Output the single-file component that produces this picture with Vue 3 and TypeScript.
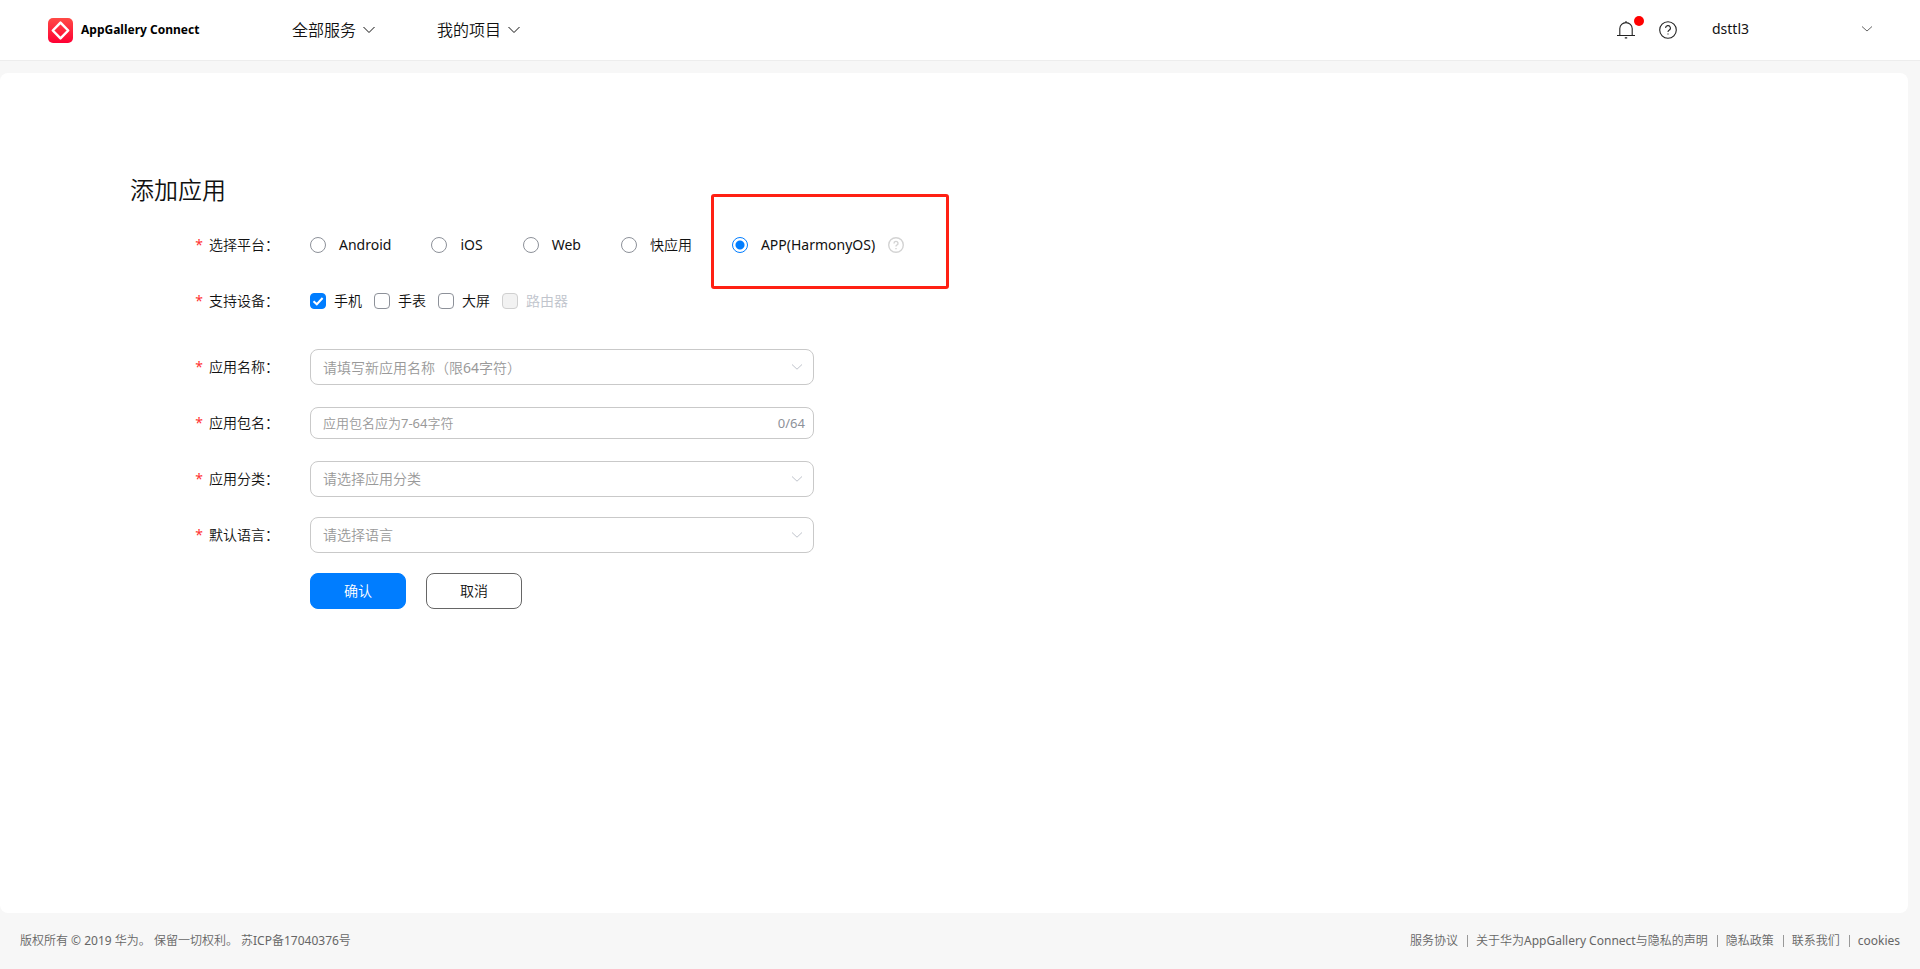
<script setup lang="ts">
import { ref } from 'vue'

interface Option {
  value: string
  label: string
  disabled?: boolean
}

const menus: string[] = ['全部服务', '我的项目']

const platforms: Option[] = [
  { value: 'android', label: 'Android' },
  { value: 'ios', label: 'iOS' },
  { value: 'web', label: 'Web' },
  { value: 'quick', label: '快应用' },
  { value: 'harmony', label: 'APP(HarmonyOS)' },
]

const devices: Option[] = [
  { value: 'phone', label: '手机' },
  { value: 'watch', label: '手表' },
  { value: 'tv', label: '大屏' },
  { value: 'router', label: '路由器', disabled: true },
]

const footerLinks: string[] = ['服务协议', '关于华为AppGallery Connect与隐私的声明', '隐私政策', '联系我们', 'cookies']

const platform = ref('harmony')
const selectedDevices = ref<string[]>(['phone'])
const appName = ref('')
const packageName = ref('')
const category = ref('')
const language = ref('')
</script>

<template>
  <div class="page">
    <header class="header">
      <a class="brand" href="#">
        <svg class="logo" viewBox="0 0 25 25" aria-hidden="true">
          <defs>
            <linearGradient id="logo-fill" x1="0" y1="0" x2="0" y2="1">
              <stop offset="0" stop-color="#ff4a45" />
              <stop offset="1" stop-color="#ff0034" />
            </linearGradient>
          </defs>
          <rect width="25" height="25" rx="5" fill="url(#logo-fill)" />
          <path d="M12.5 4.6 20.2 12.5 12.5 20.4 4.8 12.5Z" fill="none" stroke="#fff" stroke-width="2.5" stroke-linejoin="round" />
        </svg>
        <span>AppGallery Connect</span>
      </a>
      <nav class="nav">
        <button v-for="menu in menus" :key="menu" type="button" class="nav-item">
          {{ menu }}
          <svg class="nav-arrow" viewBox="0 0 12 8" aria-hidden="true"><path d="M.5 1 6 6.5 11.5 1" /></svg>
        </button>
      </nav>
      <div class="tools">
        <button type="button" class="tool bell" aria-label="消息">
          <svg viewBox="0 0 18 18" aria-hidden="true">
            <path d="M0 14.5H18M2.8 14.2V7.6A6.2 6 0 0 1 15.2 7.6V14.2M9 0V1.6M7.8 16.9H10.2" />
          </svg>
          <span class="dot"></span>
        </button>
        <button type="button" class="tool" aria-label="帮助">
          <svg viewBox="0 0 18 18" aria-hidden="true">
            <circle cx="9" cy="9" r="8.3" />
            <path d="M6.6 7.1A2.4 2.4 0 1 1 10 9.2Q9 9.7 9 11M9 12.4V13.6" />
          </svg>
        </button>
        <button type="button" class="account">
          <span>dsttl3</span>
          <svg class="account-arrow" viewBox="0 0 12 8" aria-hidden="true"><path d="M1 1.5 6 6 11 1.5" /></svg>
        </button>
      </div>
    </header>

    <main class="card">
      <h1 class="title">添加应用</h1>
      <form class="form" @submit.prevent>
        <div class="row" role="radiogroup" aria-labelledby="platform-label">
          <span id="platform-label" class="label">选择平台：</span>
          <div class="radios">
            <div v-for="item in platforms" :key="item.value" class="radio-item">
              <label class="radio">
                <input v-model="platform" type="radio" name="platform" :value="item.value" />
                <span>{{ item.label }}</span>
              </label>
              <template v-if="item.value === 'harmony'">
                <svg class="hint" viewBox="0 0 16 16" aria-hidden="true">
                  <circle cx="8" cy="8" r="7.3" />
                  <path d="M6 6.4A2 2 0 1 1 8.8 8.2Q8 8.6 8 9.6M8 11V12.2" />
                </svg>
                <span class="highlight"></span>
              </template>
            </div>
          </div>
        </div>

        <div class="row devices-row" role="group" aria-labelledby="device-label">
          <span id="device-label" class="label">支持设备：</span>
          <div class="checks">
            <label v-for="item in devices" :key="item.value" class="check" :class="{ disabled: item.disabled }">
              <input v-model="selectedDevices" type="checkbox" :value="item.value" :disabled="item.disabled" />
              <svg class="tick" viewBox="0 0 16 16" aria-hidden="true"><path d="M3.5 8.2 6.8 11.3 12.6 5" /></svg>
              <span>{{ item.label }}</span>
            </label>
          </div>
        </div>

        <div class="row">
          <label class="label" for="app-name">应用名称：</label>
          <div class="field">
            <input id="app-name" v-model="appName" class="control" type="text" role="combobox" aria-expanded="false" placeholder="请填写新应用名称（限64字符）" />
            <svg class="arrow" viewBox="0 0 12 8" aria-hidden="true"><path d="M1 1.5 6 6.2 11 1.5" /></svg>
          </div>
        </div>

        <div class="row">
          <label class="label" for="package-name">应用包名：</label>
          <div class="field">
            <input id="package-name" v-model="packageName" class="control compact" type="text" maxlength="64" placeholder="应用包名应为7-64字符" />
            <span class="counter">{{ packageName.length }}/64</span>
          </div>
        </div>

        <div class="row">
          <label class="label" for="category">应用分类：</label>
          <div class="field">
            <select id="category" v-model="category" class="control">
              <option value="" disabled>请选择应用分类</option>
            </select>
            <svg class="arrow" viewBox="0 0 12 8" aria-hidden="true"><path d="M1 1.5 6 6.2 11 1.5" /></svg>
          </div>
        </div>

        <div class="row">
          <label class="label" for="language">默认语言：</label>
          <div class="field">
            <select id="language" v-model="language" class="control">
              <option value="" disabled>请选择语言</option>
            </select>
            <svg class="arrow" viewBox="0 0 12 8" aria-hidden="true"><path d="M1 1.5 6 6.2 11 1.5" /></svg>
          </div>
        </div>

        <div class="row actions">
          <button type="submit" class="btn primary">确认</button>
          <button type="button" class="btn">取消</button>
        </div>
      </form>
    </main>

    <footer class="footer">
      <span class="copyright">版权所有 © 2019 华为。 保留一切权利。 苏ICP备17040376号</span>
      <nav class="links">
        <a v-for="link in footerLinks" :key="link" href="#">{{ link }}</a>
      </nav>
    </footer>
  </div>
</template>

<style>
body {
  margin: 0;
}
</style>

<style scoped>
.page {
  display: flex;
  flex-direction: column;
  min-height: 100vh;
  background: #f7f7f7;
  color: #111;
  font-family: "Noto Sans", "Noto Sans CJK SC DemiLight", "Noto Sans CJK SC", sans-serif;
  font-size: 14px;
  line-height: 20px;
}

button,
input,
select {
  font: inherit;
  color: inherit;
}

svg {
  flex: none;
  fill: none;
  stroke: currentColor;
}

.header {
  display: flex;
  align-items: center;
  box-sizing: border-box;
  height: 61px;
  padding: 0 47px 0 48px;
  background: #fff;
  border-bottom: 1px solid #ededed;
}

.brand {
  display: flex;
  align-items: center;
  gap: 8px;
  width: 244px;
  color: #000;
  font-size: 12px;
  font-weight: 700;
  text-decoration: none;
}

.logo {
  width: 25px;
  height: 25px;
  stroke: none;
}

.nav {
  display: flex;
  gap: 62px;
}

.nav-item,
.tool,
.account {
  display: flex;
  align-items: center;
  padding: 0;
  border: 0;
  background: none;
  cursor: pointer;
}

.nav-item {
  gap: 7px;
  font-size: 16px;
  font-weight: 300;
}

.nav-arrow {
  width: 12px;
  height: 8px;
}

.tools {
  display: flex;
  align-items: center;
  margin-left: auto;
}

.tool {
  position: relative;
  margin-right: 24px;
}

.tool svg {
  width: 18px;
  height: 18px;
  stroke: #222;
  stroke-width: 1.1;
}

.dot {
  position: absolute;
  top: -5px;
  left: 17px;
  width: 10px;
  height: 10px;
  border-radius: 50%;
  background: #f00;
}

.account {
  justify-content: space-between;
  width: 161px;
  margin-left: 11px;
  padding-bottom: 2px;
}

.account-arrow {
  width: 12px;
  height: 8px;
  stroke: #666;
}

.card {
  flex: 1;
  margin: 12px 12px 0 0;
  padding: 99px 130px;
  border-radius: 8px;
  background: #fff;
}

.title {
  margin: 0 0 9px;
  color: #111;
  font-size: 24px;
  font-weight: 300;
  line-height: 36px;
}

.row {
  display: flex;
  align-items: center;
  min-height: 56px;
}

.devices-row {
  margin-bottom: 10px;
}

.label {
  width: 149px;
  margin-right: 31px;
  text-align: right;
}

.label::before {
  content: "*";
  margin-right: 6px;
  color: #f33;
}

.radios {
  display: flex;
  gap: 40px;
}

.radio-item {
  position: relative;
  display: flex;
  align-items: center;
  gap: 13px;
}

.radio {
  display: flex;
  align-items: center;
  gap: 13px;
}

.radio input,
.check input {
  appearance: none;
  flex: none;
  width: 16px;
  height: 16px;
  margin: 0;
  border: 1px solid #8d9199;
  background: #fff;
}

.radio input {
  border-radius: 50%;
}

.radio input:checked {
  border-color: #007dff;
  background: radial-gradient(circle, #007dff 4px, #fff 5px);
}

.hint {
  width: 16px;
  height: 16px;
  stroke: #d3d3d3;
  stroke-width: 1.4;
}

.highlight {
  position: absolute;
  top: -41px;
  left: -21px;
  box-sizing: border-box;
  width: 238px;
  height: 95px;
  border: 3px solid #ff2013;
  border-radius: 3px;
  pointer-events: none;
}

.checks {
  display: flex;
  gap: 12px;
}

.check {
  position: relative;
  display: flex;
  align-items: center;
  gap: 8px;
}

.check input {
  border-radius: 4px;
}

.check input:checked {
  border-color: #007dff;
  background: #007dff;
}

.check input:disabled {
  border-color: #d0d0d0;
  background: #f2f2f2;
}

.check.disabled {
  color: #c0c4cc;
}

.tick {
  position: absolute;
  left: 0;
  width: 16px;
  height: 16px;
  stroke: #fff;
  stroke-width: 2;
  visibility: hidden;
}

.check input:checked + .tick {
  visibility: visible;
}

.field {
  position: relative;
  display: flex;
  align-items: center;
  width: 504px;
}

.control {
  appearance: none;
  box-sizing: border-box;
  width: 100%;
  height: 36px;
  padding: 0 36px 0 12px;
  border: 1px solid #c9c9c9;
  border-radius: 8px;
  background: #fff;
  color: #999;
}

.control::placeholder {
  color: #999;
  opacity: 1;
}

.compact {
  height: 32px;
  font-size: 13px;
}

.arrow {
  position: absolute;
  right: 11px;
  width: 12px;
  height: 8px;
  stroke: #c0c4cc;
  pointer-events: none;
}

.counter {
  position: absolute;
  right: 9px;
  color: #8d9199;
  font-size: 13px;
}

.actions {
  gap: 20px;
  padding-left: 180px;
}

.btn {
  box-sizing: border-box;
  width: 96px;
  height: 36px;
  border: 1px solid #666;
  border-radius: 8px;
  background: #fff;
  cursor: pointer;
}

.primary {
  border-color: #007dff;
  background: #007dff;
  color: #fff;
}

.footer {
  display: flex;
  align-items: center;
  justify-content: space-between;
  height: 56px;
  padding: 0 20px;
  color: #666;
  font-size: 12px;
}

.links {
  display: flex;
  align-items: center;
  line-height: 12px;
}

.links a {
  color: inherit;
  text-decoration: none;
}

.links a + a {
  margin-left: 9px;
  padding-left: 8px;
  border-left: 1px solid #999;
}
</style>
